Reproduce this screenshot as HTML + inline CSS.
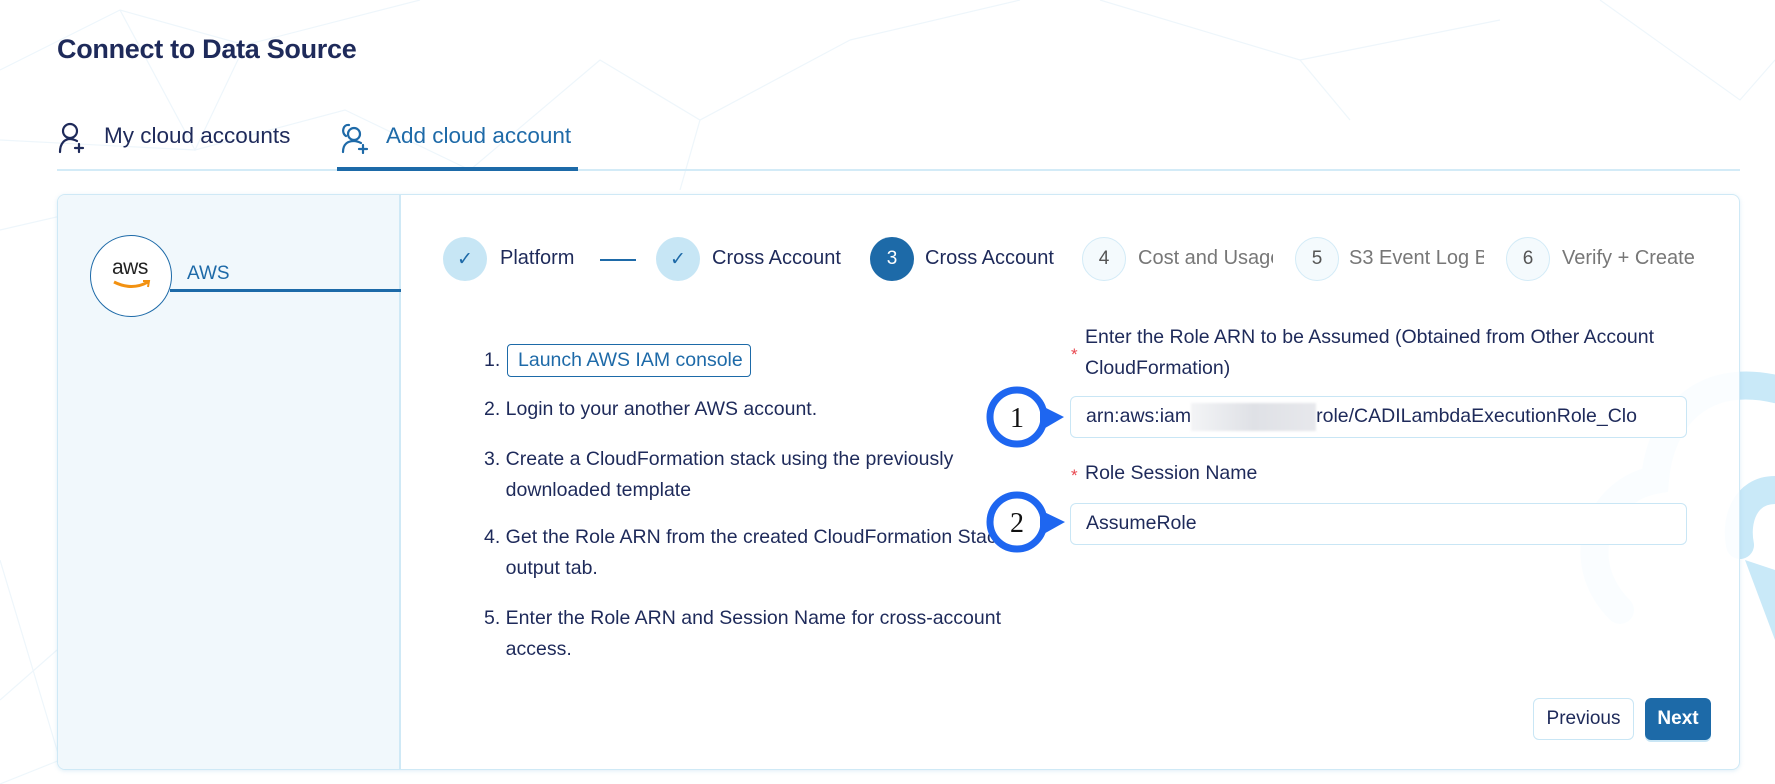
<!DOCTYPE html>
<html><head><meta charset="utf-8"><style>
*{box-sizing:border-box;margin:0;padding:0}
body{width:1775px;height:784px;overflow:hidden;background:#fff;font-family:"Liberation Sans",sans-serif;color:#1e2a5a;position:relative}
.abs{position:absolute}
.title{left:57px;top:34px;font-size:27px;font-weight:bold;color:#1e2a5a;letter-spacing:-0.3px}
.tab{top:123px;font-size:22.5px;white-space:nowrap}
.card{left:57px;top:194px;width:1683px;height:576px;border:1.5px solid #cfe9f6;border-radius:8px;background:rgba(255,255,255,0.9);overflow:hidden;box-shadow:0 1px 4px rgba(150,200,230,.3)}
.left{left:0;top:0;width:343px;height:100%;background:rgba(238,247,252,0.85);border-right:2px solid #cfe9f6}
.step{top:237px;width:44px;height:44px;border-radius:50%;display:flex;align-items:center;justify-content:center;font-size:19px}
.done{background:#c7e6f5;color:#1e6aa8}
.cur{background:#1d6aa8;color:#fff}
.todo{background:#f4fafd;border:1.5px solid #d3ebf7;color:#555}
.sl{top:247px;font-size:20px;white-space:nowrap;overflow:hidden}
.li{font-size:19.5px;color:#1e2a5a;line-height:31px;white-space:nowrap}
.inp{left:1070px;width:617px;height:42px;border:1.5px solid #c9e6f5;border-radius:6px;font-size:19.5px;padding-left:15px;line-height:39px;background:#fff;white-space:nowrap;overflow:hidden}
.lab{left:1085px;font-size:19.5px;line-height:31px;white-space:nowrap}
.ast{color:#e8474f;font-size:17px}
.btn{top:698px;height:42px;border-radius:6px;font-size:19px;display:flex;align-items:center;justify-content:center}
.blur{display:inline-block;width:125px;height:28px;vertical-align:middle;background:linear-gradient(90deg,#f3f4f6,#dfe1e6 50%,#e7e8ec);filter:blur(1px)}
</style></head><body>
<svg class="abs" style="left:0;top:0" width="1775" height="784">
<g stroke="#eef6fb" stroke-width="1.2" fill="none">
<path d="M0 70 L120 10 L245 45 L420 0"/><path d="M120 10 L195 150 L245 45"/><path d="M0 140 L195 150 L345 110 L470 170"/><path d="M0 230 L130 200 L200 380 L350 320"/>
<path d="M470 170 L600 60 L700 120 L850 40"/><path d="M700 120 L680 190"/><path d="M850 40 L1020 0"/><path d="M1100 0 L1300 60 L1500 20"/>
<path d="M1300 60 L1350 120"/><path d="M0 560 L60 760 L0 784"/><path d="M0 700 L57 650"/>
<path d="M1600 0 L1740 100 L1775 60"/>
</g>
<g stroke="#c9e9f8" stroke-width="28" fill="none" stroke-linecap="round">
<path d="M1780 390 C1700 370 1660 420 1655 480 C1600 490 1570 560 1620 610"/>
<path d="M1775 490 C1745 490 1735 520 1740 545"/>
</g>
<path d="M1745 560 L1775 570 L1775 640 Z" fill="#c9e9f8"/>
</svg>

<div class="abs title">Connect to Data Source</div>
<svg class="abs" style="left:58px;top:122px" width="28" height="32" viewBox="0 0 28 32" fill="none" stroke="#1e2a5a" stroke-width="2.2" stroke-linecap="round"><circle cx="12" cy="9" r="7"/><path d="M2 30 C2 21 7 17 12 17 C15 17 17 18 19 19"/><path d="M21 22 V30 M17 26 H25"/></svg>
<div class="abs tab" style="left:104px">My cloud accounts</div>
<svg class="abs" style="left:340px;top:122px" width="30" height="32" viewBox="0 0 30 32" fill="none" stroke="#1e6aa8" stroke-width="2.2" stroke-linecap="round"><path d="M6 14 C1 11 3 2 9 3"/><circle cx="14" cy="12" r="6"/><path d="M3 30 C3 22 8 19 14 19 C17 19 19 20 21 21"/><path d="M23 23 V31 M19 27 H27"/></svg>
<div class="abs tab" style="left:386px;color:#1e6aa8">Add cloud account</div>
<div class="abs" style="left:57px;top:169px;width:1683px;height:1.5px;background:#d3ebf7"></div>
<div class="abs" style="left:337px;top:167px;width:241px;height:3.5px;background:#1d6aa8"></div>

<div class="abs card">
 <div class="abs left"></div>
</div>
<div class="abs" style="left:170px;top:289px;width:231px;height:3px;background:#1d6aa8"></div>
<div class="abs" style="left:90px;top:235px;width:82px;height:82px;border-radius:50%;border:1.5px solid #1d6aa8;background:#fff"></div>
<div class="abs" style="left:112px;top:256px;font-size:21px;color:#222;letter-spacing:-0.5px">aws</div>
<svg class="abs" style="left:112px;top:279px" width="40" height="12"><path d="M2 3 Q20 12 36 3" stroke="#f29111" stroke-width="3" fill="none"/><path d="M31 2 L37 2 L36 8" stroke="#f29111" stroke-width="2" fill="none"/></svg>
<div class="abs" style="left:187px;top:263px;font-size:19px;color:#1e6aa8">AWS</div>

<div class="abs step done" style="left:443px">✓</div>
<div class="abs sl" style="left:500px">Platform</div>
<div class="abs" style="left:600px;top:259px;width:36px;height:1.5px;background:#1e6aa8"></div>
<div class="abs step done" style="left:656px">✓</div>
<div class="abs sl" style="left:712px">Cross Account</div>
<div class="abs step cur" style="left:870px">3</div>
<div class="abs sl" style="left:925px">Cross Account</div>
<div class="abs step todo" style="left:1082px">4</div>
<div class="abs sl" style="left:1138px;width:135px;color:#777">Cost and Usage</div>
<div class="abs step todo" style="left:1295px">5</div>
<div class="abs sl" style="left:1349px;width:135px;color:#777">S3 Event Log Bucket</div>
<div class="abs step todo" style="left:1506px">6</div>
<div class="abs sl" style="left:1562px;width:132px;color:#777">Verify + Create</div>

<div class="abs li" style="left:484px;top:345px">1.</div>
<div class="abs" style="left:507px;top:344px;width:244px;height:33px;border:1.5px solid #1d6aa8;border-radius:4px;color:#1e6aa8;font-size:19.5px;line-height:30px;padding-left:10px;white-space:nowrap">Launch AWS IAM console</div>
<div class="abs li" style="left:484px;top:394px">2. Login to your another AWS account.</div>
<div class="abs li" style="left:484px;top:444px">3. Create a CloudFormation stack using the previously<br>&nbsp;&nbsp;&nbsp;&nbsp;downloaded template</div>
<div class="abs li" style="left:484px;top:522px">4. Get the Role ARN from the created CloudFormation Stack<br>&nbsp;&nbsp;&nbsp;&nbsp;output tab.</div>
<div class="abs li" style="left:484px;top:603px">5. Enter the Role ARN and Session Name for cross-account<br>&nbsp;&nbsp;&nbsp;&nbsp;access.</div>

<div class="abs ast" style="left:1071px;top:345px">*</div>
<div class="abs lab" style="top:322px">Enter the Role ARN to be Assumed (Obtained from Other Account<br>CloudFormation)</div>
<div class="abs inp" style="top:396px">arn:aws:iam<span class="blur"></span>role/CADILambdaExecutionRole_Clo</div>
<div class="abs ast" style="left:1071px;top:466px">*</div>
<div class="abs lab" style="top:458px">Role Session Name</div>
<div class="abs inp" style="top:503px">AssumeRole</div>

<svg class="abs" style="left:985px;top:385px" width="90" height="170">
<g fill="#fff" stroke="#1e66f0" stroke-width="7">
<circle cx="32" cy="32" r="27"/>
<circle cx="32" cy="137" r="27"/></g>
<path d="M55 20 L79 32 L55 46 Z" fill="#1e66f0"/>
<path d="M55 125 L80 137 L55 151 Z" fill="#1e66f0"/>
<text x="32" y="42" text-anchor="middle" font-family="Liberation Serif" font-size="28" fill="#111">1</text>
<text x="32" y="147" text-anchor="middle" font-family="Liberation Serif" font-size="28" fill="#111">2</text>
</svg>

<div class="abs btn" style="left:1533px;width:101px;border:1.5px solid #c9e6f5;background:#fff;color:#1e2a5a">Previous</div>
<div class="abs btn" style="left:1645px;width:66px;background:#1d6aa8;color:#fff;font-weight:bold;box-shadow:0 2px 0 #c9e6f5">Next</div>
</body></html>
